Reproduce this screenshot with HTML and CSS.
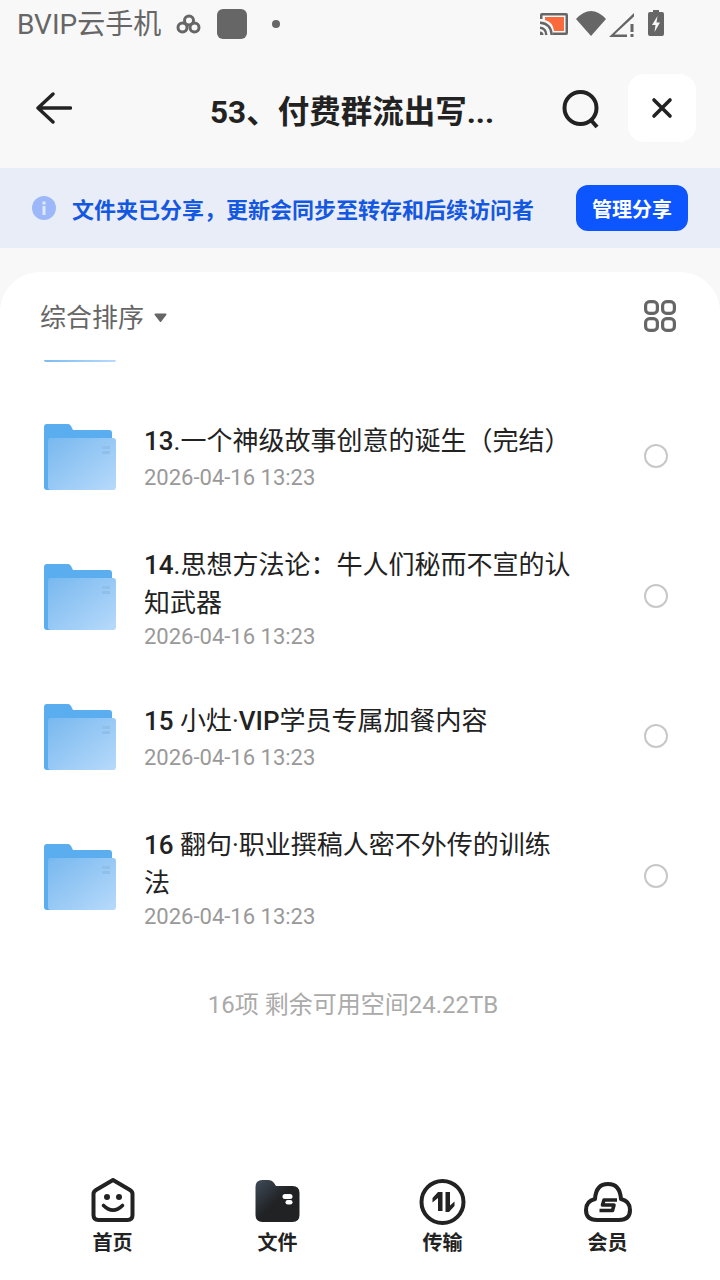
FILE: index.html
```html
<!DOCTYPE html>
<html lang="zh">
<head>
<meta charset="utf-8">
<title>53、付费群流出写</title>
<link rel="stylesheet" href="styles.css">
</head>
<body>
<svg class="defs" width="0" height="0" aria-hidden="true">
  <defs>
    <linearGradient id="fg" x1="0" y1="0" x2="1" y2="1">
      <stop offset="0" stop-color="#78b8ef"/>
      <stop offset="1" stop-color="#b7dafb"/>
    </linearGradient>
    <linearGradient id="tabf" x1="0" y1="0" x2="1" y2="1">
      <stop offset="0" stop-color="#3f4c5a"/>
      <stop offset="0.5" stop-color="#202224"/>
      <stop offset="1" stop-color="#202224"/>
    </linearGradient>
    <symbol id="folder" viewBox="0 0 72 66">
      <path d="M3 0H24Q26 0 27 2L29 6H65Q68 6 68 9V20H10V66H3Q0 66 0 63V3Q0 0 3 0Z" fill="#5aaef0"/>
      <rect x="4" y="14" width="68" height="52" rx="3" fill="url(#fg)"/>
      <rect x="58" y="22" width="8" height="3" fill="#8fc0ec"/>
      <rect x="58" y="27" width="8" height="3" fill="#8fc0ec"/>
    </symbol>
  </defs>
</svg>
<div class="page">
  <div class="status">
    <div class="status-left">
      <span class="carrier">BVIP云手机</span>
      <svg class="st-clover" width="26" height="20" viewBox="0 0 26 20" fill="none" stroke="#666" stroke-width="3"><circle cx="13" cy="6.500" r="4.500"/><circle cx="6.500" cy="13.500" r="4.500"/><circle cx="18.500" cy="13.500" r="4.500"/></svg>
      <span class="st-square"></span>
      <span class="st-dot"></span>
    </div>
    <div class="status-right">
      <svg class="st-cast" width="28" height="22" viewBox="0 0 28 22"><path d="M2 0H26Q28 0 28 2V20Q28 22 26 22H13V19.500H25.500V2.500H2.500V6H0V2Q0 0 2 0Z" fill="#666"/><path d="M5 4H24V18H14Q13 9 5 7Z" fill="#fb6a3c"/><path d="M0 8.500Q12 9 13 22H10.500Q10 11.500 0 11ZM0 13.500Q7 14 7.500 22H5Q5 16.500 0 16ZM0 18.500Q3.500 18.500 3.500 22H0Z" fill="#666"/></svg>
      <svg class="st-wifi" width="30" height="25" viewBox="0 0 30 25"><path d="M0 8Q15 -8 30 8L15 25Z" fill="#666"/></svg>
      <svg class="st-signal" width="25" height="24" viewBox="0 0 25 24"><path d="M0 24L25 0V3.500L5.500 21.500H18V24Z" fill="#666"/><rect x="21.500" y="11" width="3" height="8" fill="#666"/><rect x="21.500" y="21" width="3" height="3" fill="#666"/></svg>
      <svg class="st-batt" width="16" height="26" viewBox="0 0 16 26"><path d="M5 0H11V2H14Q16 2 16 4V24Q16 26 14 26H2Q0 26 0 24V4Q0 2 2 2H5Z" fill="#666"/><path d="M9.500 6L4 15H7.500L6.500 22L12 12.500H8.500Z" fill="#f8f8f8"/></svg>
    </div>
  </div>

  <header class="nav">
    <button class="nav-back" aria-label="返回">
      <svg width="36" height="32" viewBox="0 0 36 32" fill="none" stroke="#222" stroke-width="3.400" stroke-linecap="round" stroke-linejoin="round"><path d="M17 2L2 16L17 30M3 16H34.500"/></svg>
    </button>
    <h1 class="nav-title">53、付费群流出写...</h1>
    <button class="nav-search" aria-label="搜索">
      <svg width="40" height="40" viewBox="0 0 40 40" fill="none" stroke="#222" stroke-width="4"><circle cx="19.500" cy="19" r="16"/><path d="M29 30L36 38"/></svg>
    </button>
    <button class="nav-close" aria-label="关闭">
      <svg width="24" height="24" viewBox="0 0 24 24" fill="none" stroke="#222" stroke-width="3.600" stroke-linecap="round"><path d="M4 4L20 20M20 4L4 20"/></svg>
    </button>
  </header>

  <div class="banner">
    <svg class="banner-icon" width="24" height="24" viewBox="0 0 24 24"><circle cx="12" cy="12" r="12" fill="#9db8f8"/><rect x="10.500" y="10" width="3" height="9" fill="#dfe7fb"/><rect x="10.500" y="5.500" width="3" height="3" fill="#dfe7fb"/></svg>
    <span class="banner-text">文件夹已分享，更新会同步至转存和后续访问者</span>
    <button class="banner-btn">管理分享</button>
  </div>

  <main class="card">
    <div class="sort">
      <span class="sort-label">综合排序</span>
      <svg class="sort-caret" width="13" height="9" viewBox="0 0 13 9"><path d="M1.500 1.500H11.500L6.500 8Z" fill="#666" stroke="#666" stroke-width="2" stroke-linejoin="round"/></svg>
      <svg class="sort-grid" width="32" height="32" viewBox="0 0 32 32" fill="none" stroke="#666" stroke-width="3.200"><rect x="1.600" y="1.600" width="11.800" height="11.800" rx="4"/><rect x="18.600" y="1.600" width="11.800" height="11.800" rx="4"/><rect x="1.600" y="18.600" width="11.800" height="11.800" rx="4"/><rect x="18.600" y="18.600" width="11.800" height="11.800" rx="4"/></svg>
    </div>
    <div class="sliver"></div>
    <ul class="list">
      <li class="row">
        <svg class="row-icon"><use href="#folder"/></svg>
        <div class="row-body">
          <div class="row-title"><span class="num">13</span>.一个神级故事创意的诞生（完结）</div>
          <div class="row-date">2026-04-16 13:23</div>
        </div>
        <span class="radio"></span>
      </li>
      <li class="row">
        <svg class="row-icon"><use href="#folder"/></svg>
        <div class="row-body two">
          <div class="row-title"><span class="num">14</span>.思想方法论：牛人们秘而不宣的认<br>知武器</div>
          <div class="row-date">2026-04-16 13:23</div>
        </div>
        <span class="radio"></span>
      </li>
      <li class="row">
        <svg class="row-icon"><use href="#folder"/></svg>
        <div class="row-body">
          <div class="row-title"><span class="num">15</span> 小灶·<span class="num">VIP</span>学员专属加餐内容</div>
          <div class="row-date">2026-04-16 13:23</div>
        </div>
        <span class="radio"></span>
      </li>
      <li class="row">
        <svg class="row-icon"><use href="#folder"/></svg>
        <div class="row-body two">
          <div class="row-title"><span class="num">16</span> 翻句·职业撰稿人密不外传的训练<br>法</div>
          <div class="row-date">2026-04-16 13:23</div>
        </div>
        <span class="radio"></span>
      </li>
    </ul>
    <div class="summary">16项 剩余可用空间24.22TB</div>
  </main>

  <nav class="tabs">
    <div class="tab">
      <svg width="48" height="48" viewBox="0 0 48 48" fill="none" stroke="#222" stroke-width="4" stroke-linejoin="round"><path d="M24 2L41 12Q43.500 13.500 43.500 16V37Q43.500 42 38.500 42H9.500Q4.500 42 4.500 37V16Q4.500 13.500 7 12Z"/><circle cx="18" cy="19" r="3" fill="#222" stroke="none"/><circle cx="30" cy="19" r="3" fill="#222" stroke="none"/><path d="M14.500 27.500Q24 37 33.500 27.500" stroke-width="3.600" stroke-linecap="round"/></svg>
      <span>首页</span>
    </div>
    <div class="tab">
      <svg width="48" height="48" viewBox="0 0 48 48"><path d="M8.500 2H14Q18 2 20 5L22 8H38.500Q45.500 8 45.500 15V37Q45.500 44 38.500 44H8.500Q1.500 44 1.500 37V9Q1.500 2 8.500 2Z" fill="url(#tabf)"/><rect x="28.500" y="16" width="10" height="5" rx="2.500" fill="#fff"/><rect x="31.500" y="22" width="7" height="4.500" rx="2.250" fill="#fff"/></svg>
      <span>文件</span>
    </div>
    <div class="tab">
      <svg width="48" height="48" viewBox="0 0 48 48"><circle cx="23.500" cy="24" r="21" fill="none" stroke="#222" stroke-width="4"/><path d="M23.500 14V33H19V20L13.500 24.500V20L19 14ZM26.500 14H31V27.500L35.500 23.500V28L30 34H26.500Z" fill="#222"/></svg>
      <span>传输</span>
    </div>
    <div class="tab">
      <svg width="48" height="48" viewBox="0 0 48 48" fill="none" stroke="#222" stroke-width="4" stroke-linejoin="round"><path d="M13 42H35Q46 42 46 32Q46 23 37 21Q36 6 24 6Q12 6 11 21Q2 23 2 32Q2 42 13 42Z"/><path d="M33 22H20L18.500 27H30L28.500 32.500H15.500" stroke-width="3.600"/></svg>
      <span>会员</span>
    </div>
  </nav>
</div>
</body>
</html>
```

FILE: styles.css
```css
* { box-sizing: border-box; }
html, body { margin: 0; padding: 0; }
body {
  width: 720px;
  height: 1280px;
  overflow: hidden;
  background: #f8f8f8;
  font-family: Roboto, "Noto Sans CJK SC", sans-serif;
}
.defs { display: block; height: 0; }
button { border: 0; padding: 0; background: none; font: inherit; display: flex; align-items: center; justify-content: center; }
.page { width: 720px; height: 1280px; display: flex; flex-direction: column; }

.status { height: 48px; display: flex; justify-content: space-between; align-items: center; padding: 2px 56px 0 17px; color: #666; }
.status-left, .status-right { display: flex; align-items: center; }
.carrier { font-size: 28px; line-height: 30px; }
.st-clover { margin-left: 15px; margin-top: -2px; }
.st-square { width: 30px; height: 30px; border-radius: 6px; background: #666; margin-left: 15px; margin-top: -2px; }
.st-dot { width: 8px; height: 8px; border-radius: 50%; background: #666; margin-left: 25px; margin-top: -2px; }
.status-right svg { display: block; }
.st-cast { margin-top: -2px; }
.st-wifi { margin-left: 8px; margin-top: -3px; }
.st-signal { margin-left: 3px; margin-top: -1px; }
.st-batt { margin-left: 14px; margin-top: -4px; }

.nav { height: 120px; display: flex; align-items: center; padding: 0 24px 0 36px; }
.nav-back { width: 36px; height: 32px; margin-top: -1px; }
.nav-title { margin: 9px 0 0 138px; width: 284px; font-size: 31.5px; line-height: 40px; font-weight: 700; color: #222; white-space: nowrap; }
.nav-search { margin: 2px 0 0 67px; width: 40px; height: 40px; }
.nav-close { margin: 0 0 0 27px; width: 68px; height: 68px; border-radius: 16px; background: #fff; }

.banner { height: 80px; background: #e9edf8; display: flex; align-items: center; padding: 0 32px; }
.banner-icon { flex: none; }
.banner-text { margin-left: 16px; font-size: 22px; font-weight: 700; color: #1558e0; white-space: nowrap; }
.banner-btn { margin-left: auto; width: 112px; height: 46px; border-radius: 12px; background: #0d55ff; color: #fff; font-size: 20px; font-weight: 700; }

.card { margin-top: 24px; flex: 1; background: #fff; border-radius: 40px 40px 0 0; display: flex; flex-direction: column; }
.sort { height: 88px; display: flex; align-items: center; padding: 4px 44px 0 40px; flex: none; }
.sort-label { font-size: 26px; color: #666; line-height: 36px; }
.sort-caret { margin-left: 10px; margin-top: -2px; flex: none; }
.sort-grid { margin-left: auto; margin-top: -4px; }
.sliver { height: 2px; width: 72px; margin-left: 44px; background: linear-gradient(90deg, #7dbcf0, #b7dafb); border-radius: 0 0 3px 3px; flex: none; }

.list { list-style: none; margin: 24px 0 0; padding: 0 52px 0 44px; flex: none; }
.row { height: 140px; display: flex; align-items: center; }
.row-icon { width: 72px; height: 66px; flex: none; margin-top: 2px; }
.row-body { width: 430px; margin: 3px 0 0 28px; }
.row-title { font-size: 26px; line-height: 38px; color: #222; }
.row-date { font-size: 22px; line-height: 30px; color: #999; margin-top: 3px; }
.row-body.two { margin-top: 6px; }
.two .row-date { margin-top: 0; }
.num { font-weight: 500; }
.radio { width: 24px; height: 24px; border: 2px solid #c8c8c8; border-radius: 50%; margin-left: auto; flex: none; }

.summary { text-align: center; margin-top: 44px; padding-right: 14px; font-size: 24px; line-height: 30px; color: #aaa; }

.tabs { background: #fff; height: 110px; flex: none; display: flex; padding: 8px 30px 0; }
.tab { flex: 1; display: flex; flex-direction: column; align-items: center; font-size: 20px; font-weight: 700; color: #222; }
.tab svg { display: block; flex: none; }
.tab span { line-height: 28px; margin-top: 3px; }
```
